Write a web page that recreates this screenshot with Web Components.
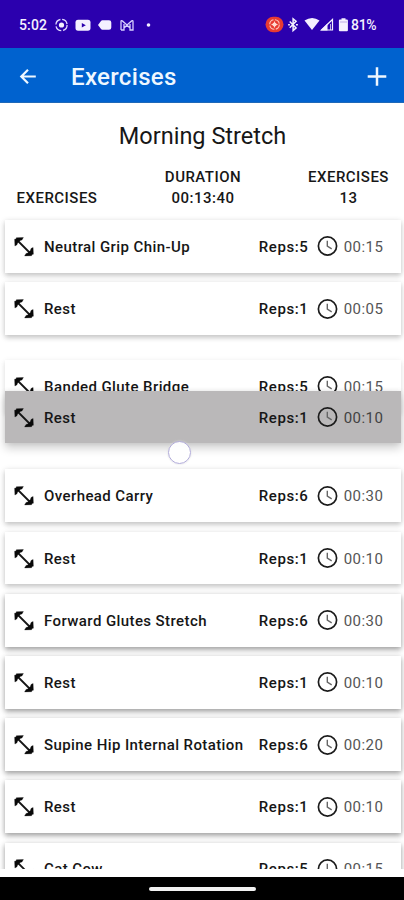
<!DOCTYPE html>
<html lang="en"><head><meta charset="utf-8"><title>Exercises</title>
<style>html,body{margin:0;height:900px;overflow:hidden;background:#fff}</style></head><body>
<workout-screen></workout-screen>
<script>
function define(name, html) {
  customElements.define(name, class extends HTMLElement {
    connectedCallback() {
      if (this.shadowRoot) return;
      const t = document.createElement('template');
      t.innerHTML = typeof html === 'function' ? html(this) : html;
      this.attachShadow({mode:'open'}).appendChild(t.content.cloneNode(true));
    }
  });
}
define('status-bar', `<style>
:host{display:flex;align-items:center;height:48px;box-sizing:border-box;padding:2px 27px 0 19px;background:#2b00ae;color:#f4f0ff;font:500 14px/20px Roboto,sans-serif}
svg{display:block;flex:none}.time{width:36px;letter-spacing:.15px}.end{margin-left:auto;display:flex;align-items:center}.pct{letter-spacing:-.3px;width:26px;white-space:nowrap}
</style><span class="time">5:02</span>
<svg width="100" height="16" viewBox="55 17 100 16" fill="#f4f0ff">
<circle cx="61.5" cy="25" r="5.6" fill="none" stroke="#e0d8ff" stroke-width="1.3" stroke-dasharray="7 1.8"/><circle cx="61.5" cy="25" r="2.6"/>
<rect x="75.5" y="19.7" width="15" height="11" rx="2.6"/><path d="M81.8 23l4 2.2-4 2.2z" fill="#2b00ae"/>
<path d="M98 25l3-4q.5-.8 1.4-.8H109q2.3 0 2.3 2.3v5q0 2.3-2.3 2.3h-6.6q-.9 0-1.4-.8z"/>
<path d="M121 30V21.4q0-1.3 1.3-.5l4.7 4 4.7-4q1.3-.8 1.3.5V30h-3v-6M121 30h3v-6M124 28l3-2.8 3 2.8" fill="none" stroke="#d8cfff" stroke-width="1.3"/>
<circle cx="148.5" cy="25" r="1.8"/></svg>
<div class="end"><svg width="87" height="18" viewBox="264.5 16 87 18" fill="#f4f0ff">
<rect x="266" y="16.8" width="18" height="15.4" rx="7.7" fill="#e83b32"/><circle cx="275" cy="24.5" r="4.8" fill="none" stroke="#ffc4b8" stroke-width="1.1" stroke-dasharray="6 1.5"/><circle cx="275" cy="24.5" r="2.1" fill="#ffd8d0"/><path d="M272 24.5h6M275 21.5v6" stroke="#ffd8d0"/>
<path d="M290.2 21.5l6.4 6.4-3 2.6V18.8l3 2.6-6.4 6.4M288.6 24.7h1.8M296.4 24.7h2" fill="none" stroke="#f4f0ff" stroke-width="1.5"/>
<path d="M305 20.5q7.7-5 15 0L312.5 30z"/>
<path d="M322 30l11-10.5V30z" fill="none" stroke="#f4f0ff" stroke-width="1.2"/><path d="M321 30.5l7-7v7z"/><path d="M331 24v6" stroke="#f4f0ff" stroke-width=".7"/>
<path d="M342 18.2h4v1.3h1.4q1 0 1 1v9.7q0 1-1 1h-7q-1 0-1-1v-9.7q0-1 1-1h1.6z"/><path d="M340.5 22h7" stroke="#bcaae5" stroke-width="1"/></svg><span class="pct">81%</span></div>`);

define('app-bar', `<style>
:host{display:flex;align-items:center;height:55px;box-sizing:border-box;padding:3px 17px 0 19px;background:#0062cf;color:#eef7ff;border-bottom:1px solid #1e68b8;font:500 24px/32px Roboto,sans-serif}
svg{display:block;flex:none}h1{font:inherit;margin:1px auto 0 34px;letter-spacing:.33px}
</style><svg width="18" height="18" viewBox="0 0 18 18" fill="none" stroke="#eef7ff" stroke-width="2.2"><path d="M16.8 8.5H3M9 1.8L2.3 8.5 9 15.2"/></svg>
<h1><slot></slot></h1><svg width="20" height="20" viewBox="0 0 20 20" stroke="#eef7ff" stroke-width="2.5"><path d="M.7 9.5h18.6M10 .2v18.6"/></svg>`);

define('workout-summary', `<style>
:host{display:block;height:117px;color:#171717;font:500 15px/21px Roboto,sans-serif;box-sizing:border-box;padding-top:18px}
h2{margin:0;text-align:center;font:400 23.5px/31px Roboto,sans-serif;letter-spacing:0;transform:translate(.5px,0)}
.cols{display:grid;grid-template-columns:114px 178px 113px;margin-top:15px;text-align:center;align-items:end;letter-spacing:.48px}
.cols div{white-space:pre-line}
</style><h2>Morning Stretch</h2><div class="cols"><div>EXERCISES</div><div>DURATION
00:13:40</div><div>EXERCISES
13</div></div>`);

define('stretch-icon', `<style>:host{display:block;width:20px;height:20px}svg{display:block}</style>
<svg width="20" height="20" viewBox="0 0 20 20"><path d="M4 4l12 12" stroke="#161616" stroke-width="1.8"/><path d="M.6 2.2L2 2 2.4.7 9.4.5 8 2.9 6.2 3.4 3.6 6 3 7.8.9 9z M19.4 17.2L18 17.4l-.4 1.3-7 .2 1.4-2.4 1.8-.5 2.6-2.6.6-1.8 2.1-1.2z" fill="#090909" stroke="#090909" stroke-width=".3"/></svg>`);
define('clock-icon', `<style>:host{display:block;width:21px;height:21px}svg{display:block}</style>
<svg width="21" height="21" viewBox="0 0 21 21" fill="none"><circle cx="10.5" cy="10.5" r="9.1" stroke="#1c1c1c" stroke-width="1.7"/><path d="M10.3 5.3v5.4l4.4 2.7" stroke="#666" stroke-width="1.4"/></svg>`);

define('exercise-card', el => `<style>
:host{display:flex;align-items:center;flex:none;height:52.8px;box-sizing:border-box;padding:1px 16.8px 0 9.5px;background:#fff;color:#161616;font:500 15px/20px Roboto,sans-serif;box-shadow:0 3px 5px rgba(0,0,0,var(--shade,.15)),0 1px 6px rgba(0,0,0,var(--haze,.13))}
:host([dragged]){background:#bab8b9;box-shadow:0 5px 9px rgba(0,0,0,.2),0 0 5px rgba(0,0,0,.08)}
stretch-icon{margin-right:10px}.name{flex:1;letter-spacing:.41px;white-space:nowrap}.reps{width:58.5px;letter-spacing:.6px;white-space:nowrap}
clock-icon{margin-right:5.5px;transform:translateY(-.5px)}.time{width:40px;font-weight:400;color:#555;letter-spacing:.45px;white-space:nowrap}:host([dragged]) .time{color:#424242}
</style><stretch-icon></stretch-icon><span class="name"><slot></slot></span><span class="reps">Reps:${el.getAttribute('reps')}</span><clock-icon></clock-icon><span class="time">${el.getAttribute('time')}</span>`);

define('exercise-list', `<style>
:host{display:flex;flex-direction:column;gap:9.4px;height:653px;box-sizing:border-box;overflow:hidden;padding:4px 3.5px 0 4.5px;margin-top:-4px;position:relative}
</style><slot></slot>`);
define('nav-bar', `<style>:host{display:flex;justify-content:center;align-items:center;height:23px;background:#000;margin-top:8px}i{width:107px;height:4px;border-radius:2px;background:#f2f2f2;margin-top:1px}</style><i></i>`);
define('workout-screen', `<style>
:host{display:block;width:404px;height:900px;overflow:hidden;background:#fff;position:relative}
.after-gap{margin-top:15.6px;--shade:.08;--haze:.08}.drop-gap{margin-top:47.3px}
.low{--shade:.25;--haze:.19}
.floating{position:absolute;left:4.5px;right:3.5px;top:390.7px}
.touch{position:absolute;left:168px;top:440.5px;width:21px;height:21px;border:1px solid #b1abd9;border-radius:50%;background:#fffffff0;box-shadow:0 0 2px #ddd}
</style>
<status-bar></status-bar><app-bar>Exercises</app-bar><workout-summary></workout-summary>
<exercise-list>
<exercise-card reps="5" time="00:15">Neutral Grip Chin-Up</exercise-card>
<exercise-card reps="1" time="00:05">Rest</exercise-card>
<exercise-card class="after-gap" reps="5" time="00:15">Banded Glute Bridge</exercise-card>
<exercise-card class="drop-gap" reps="6" time="00:30">Overhead Carry</exercise-card>
<exercise-card reps="1" time="00:10">Rest</exercise-card>
<exercise-card class="low" reps="6" time="00:30">Forward Glutes Stretch</exercise-card>
<exercise-card class="low" reps="1" time="00:10">Rest</exercise-card>
<exercise-card class="low" reps="6" time="00:20">Supine Hip Internal Rotation</exercise-card>
<exercise-card class="low" reps="1" time="00:10">Rest</exercise-card>
<exercise-card class="low" reps="5" time="00:15">Cat Cow</exercise-card>
</exercise-list><nav-bar></nav-bar>
<exercise-card class="floating" dragged reps="1" time="00:10">Rest</exercise-card><div class="touch"></div>`);
</script></body></html>
